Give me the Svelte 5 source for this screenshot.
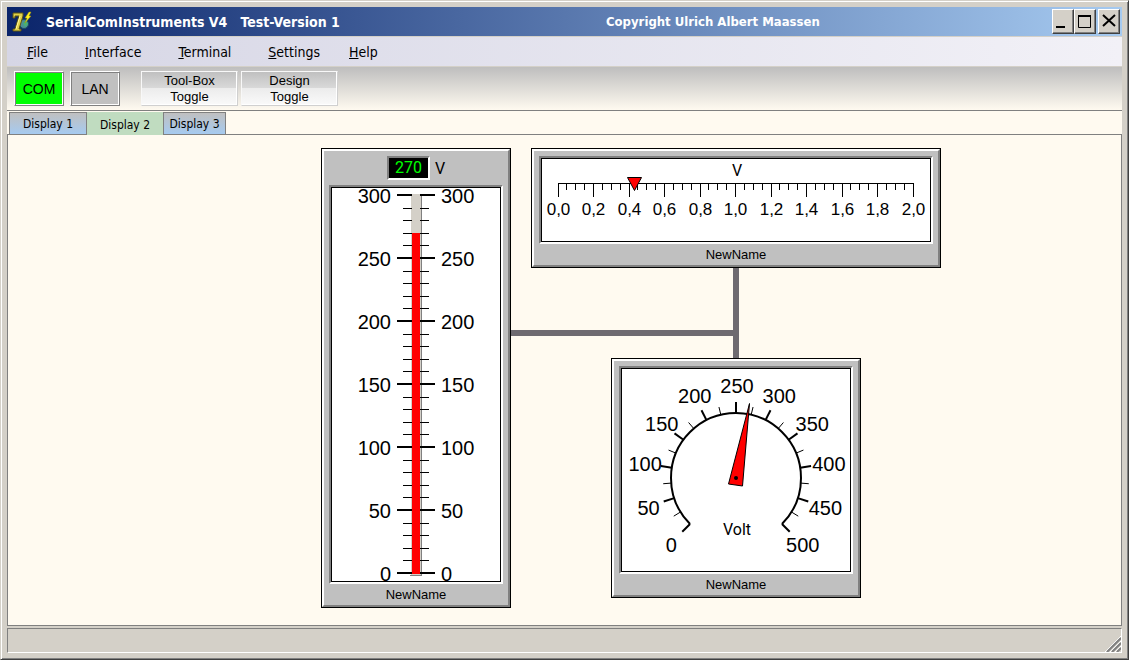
<script lang="ts">
    const menus = ["File", "Interface", "Terminal", "Settings", "Help"]
    const displays = ["Display 1", "Display 2", "Display 3"]
    let active = $state(1)
    let com = $state(true)

    const range = (n: number) => Array.from({ length: n }, (_, i) => i)

    // thermometer: 0..300, one tick every 10
    const volts = 270
    const thermoY = (v: number) => 385 - v * 1.26
    const thermoTicks = range(31).map((i) => ({ value: i * 10, y: Math.round(thermoY(i * 10)), major: i % 5 == 0 }))

    // linear scale: 0..2, one tick every 0.05
    const linearTicks = range(41).map((i) => ({
        x: Math.floor(16 + i * 8.875) + 0.5,
        major: i % 4 == 0,
        label: (i / 20).toFixed(1).replace(".", ","),
    }))

    // dial: 0..500 over 270 degrees
    const cx = 114, cy = 109
    function polar(value: number, r: number) {
        const a = ((135 + value * 0.54) * Math.PI) / 180
        return { x: cx + Math.cos(a) * r, y: cy + Math.sin(a) * r }
    }
    const dialTicks = range(21).map((i) => {
        const major = i % 2 == 0
        return { value: i * 25, major, a: polar(i * 25, 65), b: polar(i * 25, major ? 76 : 73), t: polar(i * 25, 93) }
    })
    const arcStart = polar(0, 65)
    const arcEnd = polar(500, 65)
</script>

<div class="window">
    <header class="titlebar">
        <svg class="logo" width="22" height="24" viewBox="0 0 22 24" aria-hidden="true">
            <circle cx="13" cy="14" r="4.500" fill="#4a8f98" stroke="#1c4f5c" />
            <path d="M12 13L15 11L17 14L14 17Z" fill="#48b070" />
            <path d="M2 3H12V6L8 19H10V21H2V19H4L8 6H4V8H2Z" fill="#e0d048" stroke="#5c5410" />
            <path d="M9 6L5 19" stroke="#fff8a0" />
            <path d="M18 2L14 8H16L14 13L20 6H18L20 2Z" fill="#fff020" stroke="#a09000" stroke-width=".5" />
        </svg>
        <h1>SerialComInstruments V4 &nbsp; Test-Version 1</h1>
        <span class="copyright">Copyright Ulrich Albert Maassen</span>
        <div class="winbuttons">
            <button aria-label="Minimize"><svg width="20" height="22"><path d="M3 16H12" stroke="#000" stroke-width="2" /></svg></button>
            <button aria-label="Maximize"><svg width="20" height="22"><path d="M3.500 5V16.500H15.500V5" stroke="#000" fill="none" /><path d="M3 5H16" stroke="#000" stroke-width="2" /></svg></button>
            <button class="close" aria-label="Close"><svg width="20" height="22"><path d="M4 4L16 15M16 4L4 15" stroke="#000" stroke-width="2" /></svg></button>
        </div>
    </header>

    <nav class="menubar">
        {#each menus as m}
            <button><u>{m[0]}</u>{m.slice(1)}</button>
        {/each}
    </nav>

    <div class="toolbar">
        <button class="link" class:on={com} onclick={() => (com = true)}>COM</button>
        <button class="link" class:on={!com} onclick={() => (com = false)}>LAN</button>
        <button class="toggle first">Tool-Box<br />Toggle</button>
        <button class="toggle">Design<br />Toggle</button>
    </div>

    <div class="tabs" role="tablist">
        {#each displays as d, i}
            <button role="tab" aria-selected={active == i} class:active={active == i} onclick={() => (active = i)}>{d}</button>
        {/each}
    </div>

    <main class="canvas">
        <div class="wire across"></div>
        <div class="wire down"></div>

        <section class="panel thermo">
            <div class="readout"><output>{volts}</output><span>V</span></div>
            <div class="well">
                <svg width="168" height="393" role="img" aria-label="Voltage 0 to 300">
                    <rect x="79" y="6" width="10" height="381" fill="#d4d0c8" />
                    <path d="M89.500 6V387M78 387.500H90" stroke="#808080" />
                    {#each thermoTicks as t}
                        {#if t.major}
                            <path d="M65 {t.y}H80M88 {t.y}H103" stroke="#000" stroke-width="2" />
                            <text class="big" x="59" y={t.y + 8} text-anchor="end">{t.value}</text>
                            <text class="big" x="109" y={t.y + 8}>{t.value}</text>
                        {:else}
                            <path d="M71 {t.y + 0.5}H80M88 {t.y + 0.5}H97" stroke="#000" />
                        {/if}
                    {/each}
                    <rect x="80" y={Math.round(thermoY(volts))} width="8" height={386 - Math.round(thermoY(volts))} fill="#f00" />
                </svg>
            </div>
            <footer>NewName</footer>
        </section>

        <section class="panel linear">
            <div class="well">
                <svg width="388" height="82" role="img" aria-label="Voltage 0 to 2">
                    <text class="unit" x="195" y="17" text-anchor="middle">V</text>
                    <path d="M16 24.500H372" stroke="#000" />
                    {#each linearTicks as t}
                        <path d="M{t.x} 24V{t.major ? 38 : 31}" stroke="#000" />
                        {#if t.major}
                            <text class="mid" x={t.x} y="56" text-anchor="middle">{t.label}</text>
                        {/if}
                    {/each}
                    <path d="M85.500 18.500H99.500L92.500 31.500Z" fill="#f00" stroke="#000" />
                </svg>
            </div>
            <footer>NewName</footer>
        </section>

        <section class="panel dial">
            <div class="well">
                <svg width="228" height="202" role="img" aria-label="Voltage 0 to 500">
                    <path d="M{arcStart.x} {arcStart.y}A65 65 0 1 1 {arcEnd.x} {arcEnd.y}" fill="none" stroke="#000" stroke-width="2" />
                    {#each dialTicks as t}
                        <path d="M{t.a.x} {t.a.y}L{t.b.x} {t.b.y}" stroke="#000" stroke-width={t.major ? 2 : 1} />
                        {#if t.major}
                            <text class="big" x={t.t.x + 1} y={t.t.y + 8} text-anchor="middle">{t.value}</text>
                        {/if}
                    {/each}
                    <path d="M127.500 34.500L106.500 115L120.500 117Z" fill="#f00" stroke="#000" />
                    <circle {cx} {cy} r="2" />
                    <text class="unit" x="115" y="166" text-anchor="middle">Volt</text>
                </svg>
            </div>
            <footer>NewName</footer>
        </section>
    </main>

    <footer class="status">
        <svg width="16" height="16" aria-hidden="true">
            <path d="M0 16L16 0M5 16L16 5M10 16L16 10" stroke="#fff" />
            <path d="M2 16L16 2M7 16L16 7M12 16L16 12" stroke="#808080" stroke-width="2" />
        </svg>
    </footer>
</div>

<style>
    :global(body) {
        margin: 0;
        background: #d4d0c8;
    }
    .window {
        display: flex;
        flex-direction: column;
        min-height: 100vh;
        box-sizing: border-box;
        padding: 6px;
        border: 1px solid;
        border-color: #d4d0c8 #404040 #404040 #d4d0c8;
        box-shadow: inset 1px 1px #fff, inset -1px -1px #808080;
        background: #d4d0c8;
        color: #000;
        font-family: "DejaVu Sans Condensed", "DejaVu Sans", sans-serif;
        font-size: 13px;
    }
    button {
        font: inherit;
        color: inherit;
        margin: 0;
        padding: 0;
        box-sizing: border-box;
    }

    .titlebar {
        display: flex;
        align-items: center;
        height: 29px;
        color: #fff;
        background: linear-gradient(90deg, #0a246a, #a6caf0);
        border-bottom: 1px solid #d4d0c8;
        font-weight: bold;
    }
    .logo {
        margin: 0 13px 0 4px;
    }
    h1 {
        flex: 0 0 560px;
        margin: 0;
        font-size: 14px;
    }
    .copyright {
        flex: 1;
    }
    .winbuttons {
        display: flex;
        margin-right: 2px;
    }
    .winbuttons button {
        width: 22px;
        height: 25px;
        border: 1px solid;
        border-color: #fff #404040 #404040 #fff;
        box-shadow: inset -1px -1px #808080;
        background: #d4d0c8;
    }
    .winbuttons .close {
        margin-left: 2px;
    }
    .winbuttons svg {
        display: block;
    }

    .menubar {
        display: flex;
        gap: 37px;
        height: 29px;
        padding-left: 20px;
        background: linear-gradient(90deg, #d6d6e5, #f2f1f7);
        border-bottom: 1px solid #d4d0c8;
    }
    .menubar button {
        border: 0;
        background: none;
        font-size: 14px;
    }
    .menubar button:last-child {
        margin-left: -8px;
    }

    .toolbar {
        display: flex;
        align-items: flex-start;
        gap: 3px;
        height: 43px;
        box-sizing: content-box;
        padding-left: 7px;
        background: linear-gradient(#bebebe, #fffaf0);
        border-bottom: 1px solid #808080;
        font-family: "Liberation Sans", Arial, sans-serif;
    }
    .toolbar button {
        height: 35px;
        margin-top: 4px;
    }
    .link {
        width: 50px;
        margin-right: 3px;
        border: 1px solid;
        border-color: #fff #808080 #808080 #fff;
        box-shadow: inset 1px 1px #808080, inset -1px -1px #fff;
        background: #c0c0c0;
        font-size: 14px;
    }
    .link.on {
        background: #0f0;
    }
    .toggle {
        width: 97px;
        border: 1px solid;
        border-color: #f8f8f8 #d0d0d0 #d0d0d0 #f8f8f8;
        box-shadow: inset -1px -1px #fff;
        background: linear-gradient(#c0c0c0, #dadada 50%, #ececec 50%, #fafafa);
        font-size: 13px;
        line-height: 16px;
    }
    .toggle.first {
        margin-left: 15px;
    }

    .tabs {
        display: flex;
        height: 23px;
        padding: 1px 0 0 2px;
        box-sizing: border-box;
        background: #fffaf0;
    }
    .tabs button {
        width: 78px;
        border: 1px solid #808080;
        border-bottom: 0;
        background: linear-gradient(#c0c0c0, #a6caf0);
        line-height: 18px;
        font-size: 12px;
    }
    .tabs button:last-child {
        width: 63px;
    }
    .tabs .active {
        width: 76px;
        border: 0;
        background: #c0dcc0;
        padding-top: 3px;
        margin-bottom: -1px;
        z-index: 1;
    }

    .canvas {
        position: relative;
        flex: 1;
        min-height: 490px;
        border: 1px solid #808080;
        background: #fffaf0;
    }
    .wire {
        position: absolute;
        background: #6e6a70;
    }
    .across {
        left: 503px;
        top: 195px;
        width: 222px;
        height: 6px;
    }
    .down {
        left: 725px;
        top: 133px;
        width: 6px;
        height: 90px;
    }

    .panel {
        position: absolute;
        padding: 5px 5px 0;
        border: 2px solid;
        border-color: #fff #808080 #808080 #fff;
        outline: 1px solid #000;
        background: #c0c0c0;
        font-family: "Liberation Sans", Arial, sans-serif;
    }
    .thermo {
        left: 314px;
        top: 14px;
        padding-top: 0;
    }
    .linear {
        left: 524px;
        top: 14px;
    }
    .dial {
        left: 604px;
        top: 224px;
    }
    .well {
        border: 2px solid;
        border-color: #808080 #fff #fff #808080;
    }
    .well svg {
        display: block;
        overflow: visible;
        border: 1px solid #000;
        background: #fff;
    }
    .panel footer {
        line-height: 21px;
        font-size: 13px;
        text-align: center;
    }
    .readout {
        display: flex;
        align-items: center;
        justify-content: center;
        gap: 5px;
        height: 34px;
        font-family: Roboto, Arial, sans-serif;
        font-size: 16px;
    }
    .readout output {
        padding: 0 6px;
        border: 2px solid;
        border-color: #808080 #fff #fff #808080;
        background: #000;
        color: #0f0;
        line-height: 20px;
    }
    .big {
        font-size: 20px;
    }
    .mid {
        font-size: 17px;
    }
    .unit {
        font-family: Roboto, Arial, sans-serif;
        font-size: 16px;
    }

    .status {
        display: flex;
        justify-content: flex-end;
        align-items: flex-end;
        height: 23px;
        margin-top: 2px;
        border: 1px solid;
        border-color: #808080 #fff #fff #808080;
    }
</style>
